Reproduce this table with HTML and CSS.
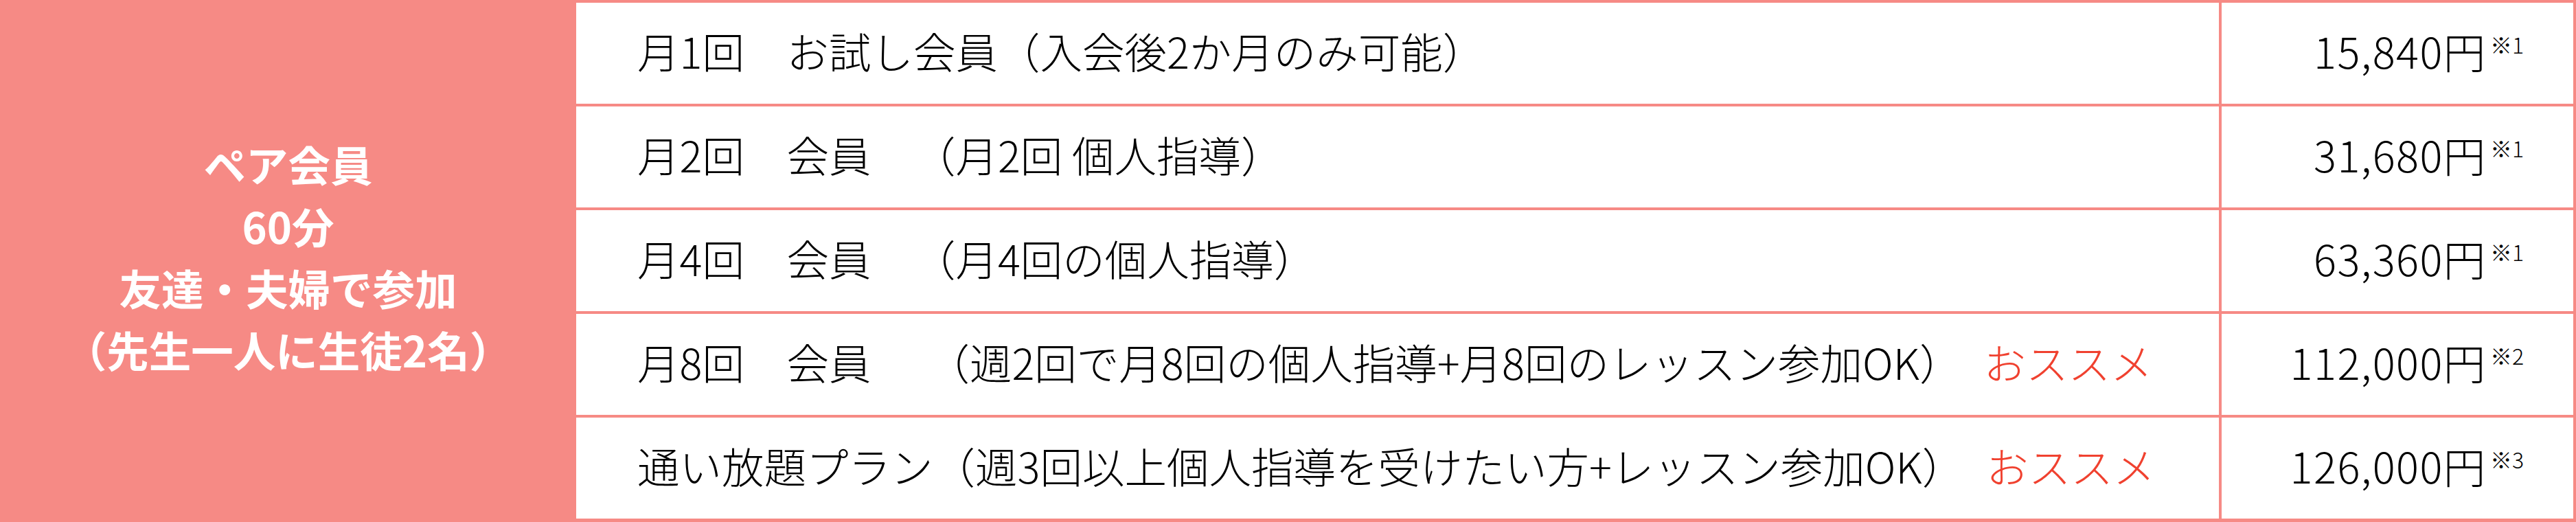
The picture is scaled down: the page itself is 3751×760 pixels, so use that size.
FILE: index.html
```html
<!DOCTYPE html>
<html lang="ja">
<head>
<meta charset="utf-8">
<title>ペア会員 料金表</title>
<link rel="stylesheet" href="styles.css">
</head>
<body>
<div class="plan">
  <div class="plan-head">
    <p class="plan-head__line">ペア会員</p>
    <p class="plan-head__line">60分</p>
    <p class="plan-head__line">友達・夫婦で参加</p>
    <p class="plan-head__line">（先生一人に生徒2名）</p>
  </div>

  <div class="plan-desc"><span>月1回　お試し会員（入会後2か月のみ可能）</span></div>
  <div class="plan-price"><span><span class="amount">15,840円</span><span class="note">※1</span></span></div>

  <div class="plan-desc"><span>月2回　会員　（月2回 個人指導）</span></div>
  <div class="plan-price"><span><span class="amount">31,680円</span><span class="note">※1</span></span></div>

  <div class="plan-desc"><span>月4回　会員　（月4回の個人指導）</span></div>
  <div class="plan-price"><span><span class="amount">63,360円</span><span class="note">※1</span></span></div>

  <div class="plan-desc"><span>月8回　会員　&#x2004;（週2回で月8回の個人指導+月8回のレッスン参加OK）<span class="recommend">おススメ</span></span></div>
  <div class="plan-price"><span><span class="amount">112,000円</span><span class="note">※2</span></span></div>

  <div class="plan-desc"><span>通い放題プラン（週3回以上個人指導を受けたい方+レッスン参加OK）<span class="recommend">おススメ</span></span></div>
  <div class="plan-price"><span><span class="amount">126,000円</span><span class="note">※3</span></span></div>
</div>
</body>
</html>
```

FILE: styles.css
```css
html, body {
  margin: 0;
  padding: 0;
  background: #ffffff;
}

body {
  width: 3751px;
  height: 760px;
  font-family: "Noto Sans CJK JP", "Noto Sans", sans-serif;
  text-spacing-trim: space-all;
}

.plan {
  display: grid;
  grid-template-columns: 835px 1fr 512px;
  grid-template-rows: repeat(5, 147px);
  gap: 4px;
  padding: 4px 4px 5px 0;
  background: #f68a85;
  height: 760px;
  box-sizing: border-box;
}

.plan-head {
  grid-row: 1 / -1;
  grid-column: 1;
  background: #f68a85;
  display: flex;
  flex-direction: column;
  justify-content: center;
  align-items: center;
  padding: 0 0 12px 4px;
  color: #ffffff;
  font-weight: 700;
  font-size: 61.5px;
  line-height: 90px;
  text-align: center;
}

.plan-head__line {
  margin: 0;
  white-space: nowrap;
}

.plan-desc {
  grid-column: 2;
  background: #ffffff;
  display: flex;
  align-items: center;
  padding: 0 0 8px 89px;
  font-size: 61.5px;
  font-weight: 300;
  line-height: 1.45;
  color: #000000;
  white-space: nowrap;
}

.recommend {
  color: #f0412f;
  margin-left: 32px;
}

.plan-price {
  grid-column: 3;
  background: #ffffff;
  display: flex;
  align-items: center;
  justify-content: flex-end;
  padding: 0 72px 8px 0;
  font-size: 61.5px;
  font-weight: 300;
  line-height: 1.45;
  color: #000000;
  white-space: nowrap;
}

.amount {
  letter-spacing: 1.5px;
}

.note {
  font-size: 32px;
  line-height: 0;
  vertical-align: 22px;
  margin-left: 5px;
}
```
